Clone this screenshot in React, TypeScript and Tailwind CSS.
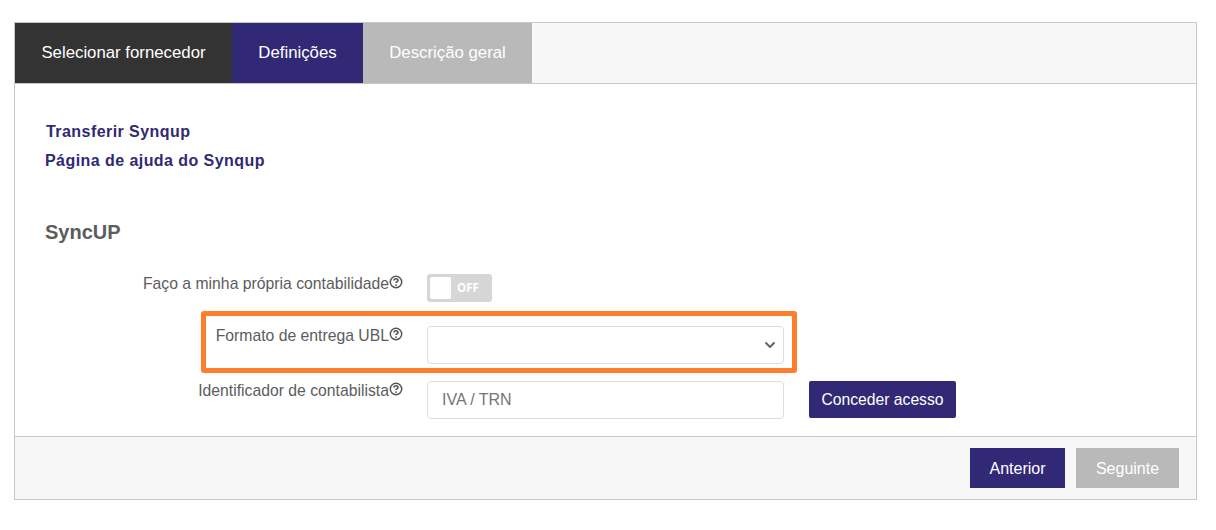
import React from "react";
import { ChevronDown } from "lucide-react";

const HelpIcon = () => (
  <svg width="14" height="14" viewBox="0 0 14 14" fill="none" className="shrink-0 mt-[1px]">
    <circle cx="7" cy="7" r="5.7" stroke="#555" strokeWidth="1.5" />
    <path
      d="M5 5.6c0-1.2.9-1.9 2-1.9s2 .7 2 1.7c0 1.3-2 1.4-2 2.6"
      stroke="#555"
      strokeWidth="1.6"
      fill="none"
    />
    <circle cx="7" cy="10.1" r="0.95" fill="#555" />
  </svg>
);

const Label = ({ text }: { text: string }) => (
  <div className="w-[388px] shrink-0 flex justify-end items-start text-[#5c5c5c] text-[15.75px] leading-[20px]">
    <span>{text}</span>
    <HelpIcon />
  </div>
);

const App = () => {
  return (
    <div className="w-[1216px] h-[530px] bg-white pt-[22px] pl-[14px] font-['Liberation_Sans',Arial,sans-serif]">
      <div className="w-[1183px] h-[478px] border border-[#c8c8c8] flex flex-col">
        <div className="h-[61px] shrink-0 bg-[#f7f7f7] border-b border-[#c8c8c8] flex">
          <div className="w-[217px] h-[60px] bg-[#333333] text-white text-[16.8px] flex items-center justify-center">
            Selecionar fornecedor
          </div>
          <div className="w-[131px] h-[60px] bg-[#312975] text-white text-[16.8px] flex items-center justify-center">
            Definições
          </div>
          <div className="w-[169px] h-[60px] bg-[#b9b9b9] text-white text-[16.8px] flex items-center justify-center">
            Descrição geral
          </div>
        </div>

        <div className="flex-1 bg-white">
          <div className="pl-[30px] pt-[38px]">
            <div className="text-[#312975] font-bold text-[16px] tracking-[0.44px] leading-[20px] pl-[1px]">Transferir Synqup</div>
            <div className="text-[#312975] font-bold text-[16px] tracking-[0.44px] leading-[20px] mt-[9px]">Página de ajuda do Synqup</div>
            <div className="text-[#5c5c5c] font-bold text-[20px] leading-[24px] mt-[49px]">SyncUP</div>
          </div>

          <div className="mt-[30px] flex">
            <Label text="Faço a minha própria contabilidade" />
            <div className="ml-[24px] w-[65px] h-[28px] rounded-[3px] bg-[#d6d6d6] flex items-center pl-[3px]">
              <div className="w-[21px] h-[22px] rounded-[2px] bg-white" />
              <span className="ml-[6px] text-white font-bold text-[11.5px] font-['Open_Sans',sans-serif]">OFF</span>
            </div>
          </div>

          <div className="relative mt-[24px] flex">
            <Label text="Formato de entrega UBL" />
            <div className="ml-[24px] w-[357px] h-[38px] border border-[#dddddd] rounded-[4px] bg-white flex items-center justify-end pr-[5px]">
              <ChevronDown size={16} strokeWidth={3} className="text-[#666]" />
            </div>
            <div className="absolute left-[186px] top-[-15px] w-[596px] h-[62px] border-[5px] border-[#fd7f2b] rounded-[3px]" />
          </div>

          <div className="mt-[17px] flex">
            <Label text="Identificador de contabilista" />
            <div className="ml-[24px] w-[357px] h-[38px] border border-[#dddddd] rounded-[4px] bg-white flex items-center pl-[14px] text-[16px] text-[#757575]">
              IVA / TRN
            </div>
            <div className="ml-[25px] w-[147px] h-[37px] rounded-[2px] bg-[#312975] text-white text-[15.7px] flex items-center justify-center">
              Conceder acesso
            </div>
          </div>
        </div>

        <div className="h-[63px] shrink-0 bg-[#f7f7f7] border-t border-[#c8c8c8] flex justify-end items-start pt-[11px] pr-[17px] gap-[11px]">
          <div className="w-[95px] h-[40px] pt-[1px] bg-[#312975] text-white text-[16px] flex items-center justify-center">
            Anterior
          </div>
          <div className="w-[103px] h-[40px] pt-[1px] bg-[#b9b9b9] text-white text-[16px] flex items-center justify-center">
            Seguinte
          </div>
        </div>
      </div>
    </div>
  );
};

export default App;
